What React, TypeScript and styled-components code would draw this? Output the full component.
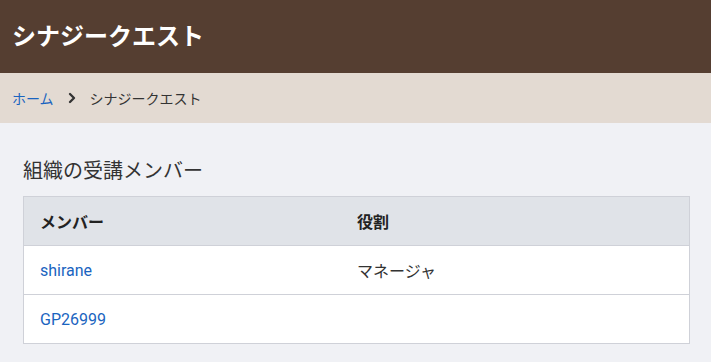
import React from 'react'
import styled, { createGlobalStyle } from 'styled-components'
import { ChevronRight } from 'lucide-react'

const GlobalStyle = createGlobalStyle`
  html, body {
    margin: 0;
    padding: 0;
    background: #f0f1f5;
    font-family: Roboto, "Noto Sans CJK JP", sans-serif;
    color: #212529;
  }
`

const Header = styled.header`
  background: #553e31;
  height: 73px;
  display: flex;
  align-items: center;
  padding: 0 12px;
`

const Title = styled.h1`
  margin: 0;
  color: #ffffff;
  font-size: 24px;
  font-weight: 700;
  line-height: 1;
`

const Breadcrumb = styled.nav`
  background: #e3dad2;
  height: 50px;
  display: flex;
  align-items: center;
  padding: 0 12px;
  font-size: 14px;
  gap: 10px;
`

const Crumb = styled.a`
  color: #1a64c0;
  text-decoration: none;
`

const Current = styled.span`
  color: #333333;
`

const Main = styled.main`
  padding: 34px 21px 0 23px;
`

const SectionTitle = styled.h2`
  margin: 0 0 11px;
  font-size: 20px;
  font-weight: 400;
  color: #333333;
  line-height: 28px;
`

const Table = styled.table`
  width: 667px;
  border-collapse: collapse;
  border: 1px solid #cfd1d8;
  background: #ffffff;
  font-size: 16px;
`

const HeadCell = styled.th<{ $width?: number }>`
  background: #e0e3e8;
  text-align: left;
  font-weight: 700;
  height: 48px;
  padding: 0 16px;
  width: ${(p) => (p.$width ? `${p.$width}px` : 'auto')};
  color: #222222;
`

const Row = styled.tr`
  border-top: 1px solid #cfd1d8;
`

const Cell = styled.td`
  height: 48px;
  padding: 0 16px;
  color: #333333;
`

const MemberLink = styled.a`
  color: #1a64c0;
  text-decoration: none;
`

const members = [
  { name: 'shirane', role: 'マネージャ' },
  { name: 'GP26999', role: '' },
]

export default function App() {
  return (
    <>
      <GlobalStyle />
      <Header>
        <Title>シナジークエスト</Title>
      </Header>
      <Breadcrumb>
        <Crumb href="#">ホーム</Crumb>
        <ChevronRight size={16} strokeWidth={3.5} color="#333" />
        <Current>シナジークエスト</Current>
      </Breadcrumb>
      <Main>
        <SectionTitle>組織の受講メンバー</SectionTitle>
        <Table>
          <thead>
            <tr>
              <HeadCell $width={285}>メンバー</HeadCell>
              <HeadCell>役割</HeadCell>
            </tr>
          </thead>
          <tbody>
            {members.map((m) => (
              <Row key={m.name}>
                <Cell>
                  <MemberLink href="#">{m.name}</MemberLink>
                </Cell>
                <Cell>{m.role}</Cell>
              </Row>
            ))}
          </tbody>
        </Table>
      </Main>
    </>
  )
}
